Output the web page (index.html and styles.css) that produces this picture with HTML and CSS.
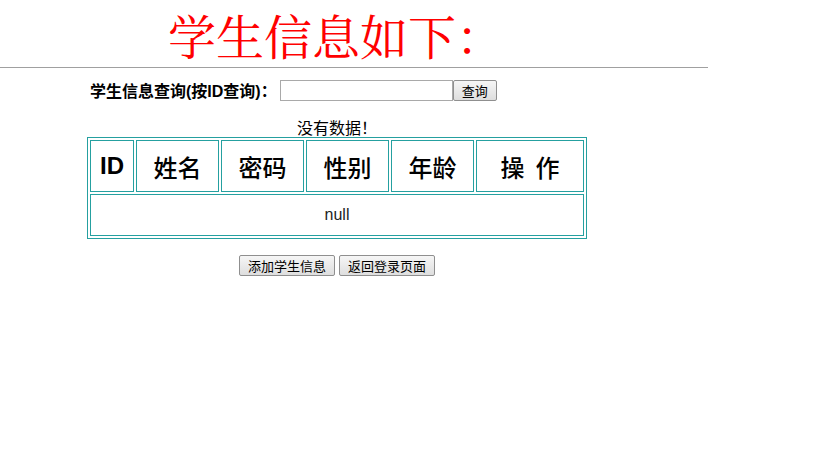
FILE: index.html
```html
<!DOCTYPE html>
<html lang="zh-CN">
<head>
    <meta charset="UTF-8">
    <title>学生信息</title>
    <link rel="stylesheet" href="styles.css">
</head>
<body>

    <!-- Title -->
    <h1 class="title">学生信息如下：</h1>
    <hr class="line">

    <!-- Query -->
    <form class="query">
        <label>学生信息查询(按ID查询)：</label><input type="text" class="query-input"><button type="button" class="btn">查询</button>
    </form>

    <!-- Student table -->
    <div class="main">
        <p class="msg">没有数据！</p>
        <table class="stu-table">
            <tr class="head">
                <th class="id">ID</th>
                <th class="w-name">姓名</th>
                <th class="w-name">密码</th>
                <th class="w-name">性别</th>
                <th class="w-name">年龄</th>
                <th class="w-op">操&nbsp;&nbsp;作</th>
            </tr>
            <tr>
                <td colspan="6" class="empty">null</td>
            </tr>
        </table>

        <div class="actions">
            <button type="button" class="btn">添加学生信息</button>
            <button type="button" class="btn">返回登录页面</button>
        </div>
    </div>

</body>
</html>
```

FILE: styles.css
```css
body { margin: 0; font-family: "Liberation Sans", "Noto Sans CJK SC", sans-serif; color: #000; background: #fff; }

/* Title */
.title { margin: 0 0 -2px; padding: 0 0 0 168px; font-family: "Noto Serif CJK SC", "Noto Sans CJK SC", serif; font-weight: normal; font-size: 48px; line-height: normal; color: #f00; }
.line { width: 708px; margin: 0; border: none; border-top: 1px solid #a0a0a0; height: 0; }

/* Query */
.query { display: flex; align-items: center; margin: 10px 0 0 90px; font-size: 16px; font-weight: bold; }
.query label { margin-right: 3px; }
.query-input { width: 173px; height: 21px; box-sizing: border-box; border: 1px solid #a9a9a9; padding: 0 2px; margin: 0; }

.btn { font-family: "Noto Sans CJK SC", sans-serif; font-size: 13px; height: 21px; line-height: 17px; padding: 0 8px; margin: 0; border: 1px solid #8f8f8f; border-radius: 2px; background: linear-gradient(#f6f6f6, #dedede); color: #000; }

/* Table */
.main { width: 500px; margin-left: 87px; }
.msg { margin: 15px 0 0; text-align: center; font-family: "Noto Sans CJK SC", sans-serif; font-size: 16px; line-height: 20px; }
.stu-table { width: 500px; border: 1px solid #25a0a0; border-spacing: 2px; }
.stu-table th, .stu-table td { border: 1px solid #25a0a0; padding: 0; text-align: center; }
.head th { height: 50px; font-family: "Noto Sans CJK SC", sans-serif; font-size: 24px; font-weight: 500; }
.head th.id { width: 42px; font-family: "Liberation Sans", sans-serif; font-weight: bold; }
.w-name { width: 81px; }
.empty { height: 40px; font-size: 16px; color: #222; }

.actions { display: flex; justify-content: center; gap: 4px; margin-top: 16px; }
```
